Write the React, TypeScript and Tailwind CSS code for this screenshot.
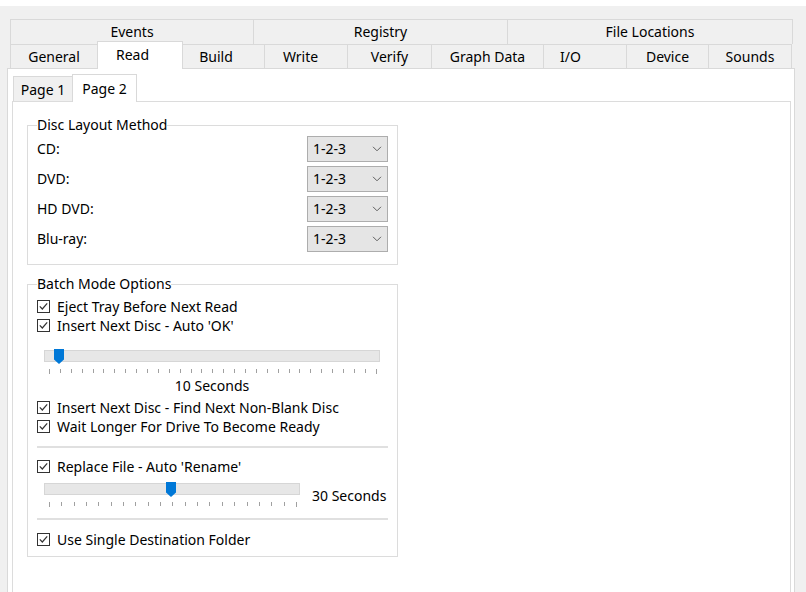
import React from 'react';

type Tab = { label: string; w: string; pad?: string; active?: boolean };

const topTabs: Tab[] = [
  { label: 'Events', w: 'w-[243px]' },
  { label: 'Registry', w: 'w-[254px]' },
  { label: 'File Locations', w: 'w-[286px]' },
];

const mainTabs: Tab[] = [
  { label: 'General', w: 'w-[87px]' },
  { label: 'Read', w: 'w-[86px]', pad: 'pr-[15px]', active: true },
  { label: 'Build', w: 'w-[82px]', pad: 'pr-[15px]' },
  { label: 'Write', w: 'w-[83px]', pad: 'pr-[11px]' },
  { label: 'Verify', w: 'w-[84px]' },
  { label: 'Graph Data', w: 'w-[112px]' },
  { label: 'I/O', w: 'w-[83px]', pad: 'pr-[29px]' },
  { label: 'Device', w: 'w-[82px]' },
  { label: 'Sounds', w: 'w-[84px]' },
];

const discTypes = ['CD:', 'DVD:', 'HD DVD:', 'Blu-ray:'];

const CheckRow = ({ label }: { label: string }) => (
  <div className="flex h-[19px] items-center pl-[9px]">
    <div className="flex h-[13px] w-[13px] items-center justify-center border border-[#333333] bg-white">
      <svg width="11" height="11" viewBox="0 0 11 11">
        <path d="M1.8 5.4 L4.3 8 L9.2 2.4" fill="none" stroke="#333333" strokeWidth="1.2" />
      </svg>
    </div>
    <span className="ml-[7px] whitespace-nowrap">{label}</span>
  </div>
);

const Combo = () => (
  <div className="flex h-[26px] w-[81px] items-center justify-between border border-[#adadad] bg-[#e5e5e5] pl-[5px] pr-[5px]">
    <span>1-2-3</span>
    <svg width="10" height="6" viewBox="0 0 10 6">
      <path d="M1 0.8 L5 4.8 L9 0.8" fill="none" stroke="#606060" strokeWidth="1" />
    </svg>
  </div>
);

// trackbar: track, thumb and tick row
const Slider = ({ width, ticks, thumbLeft }: { width: number; ticks: number; thumbLeft: number }) => (
  <div style={{ width }}>
    <div className="relative h-[12px] border border-[#d6d6d6] bg-[#e7e7e7]">
      <svg
        className="absolute top-[-2px]"
        style={{ left: thumbLeft - 1 }}
        width="10"
        height="15"
        viewBox="0 0 10 15"
      >
        <path d="M0 0 H10 V10.5 L5 15 L0 10.5 Z" fill="#0078d7" />
      </svg>
    </div>
    <div className="mt-[7px] flex h-[6px] items-start justify-between pl-[5px] pr-[3px]">
      {Array.from({ length: ticks }).map((_, i) => (
        <div
          key={i}
          className={
            i === 0 || i === ticks - 1 ? 'h-[5px] w-px bg-[#a0a0a0]' : 'h-[4px] w-px bg-[#a0a0a0]'
          }
        />
      ))}
    </div>
  </div>
);

const App = () => {
  return (
    <div className="h-[592px] w-[806px] overflow-hidden bg-[#f0f0f0] font-['Noto_Sans',sans-serif] text-[14px] leading-[18px] text-black">
      <div className="h-[6px] bg-white" />
      <div className="pl-[7px] pt-[13px]">
        {/* outer tab strip, two rows */}
        <div className="ml-[3px] w-[783px]">
          <div className="flex h-[25px]">
            {topTabs.map((t, i) => (
              <div
                key={t.label}
                className={`${t.w} flex items-center justify-center border-l border-t border-[#d9d9d9] bg-[#f0f0f0] ${
                  i === topTabs.length - 1 ? 'border-r' : ''
                }`}
              >
                {t.label}
              </div>
            ))}
          </div>
          <div className="flex h-[24px] items-end">
            {mainTabs.map((t, i) =>
              t.active ? (
                <div
                  key={t.label}
                  className={`${t.w} ${t.pad} relative z-10 -mb-px -mr-px flex h-[28px] items-center justify-center border-x border-t border-[#d9d9d9] bg-white pb-[2px]`}
                >
                  {t.label}
                </div>
              ) : (
                <div
                  key={t.label}
                  className={`${t.w} ${t.pad ?? ''} flex h-[24px] items-center justify-center border-l border-t border-[#d9d9d9] bg-[#f0f0f0] ${
                    i === mainTabs.length - 1 ? 'border-r' : ''
                  }`}
                >
                  {t.label}
                </div>
              )
            )}
          </div>
        </div>

        {/* outer panel */}
        <div className="h-[540px] w-[788px] border border-[#d9d9d9] bg-white pl-[4px] pr-[3px] pt-[5px]">
          <div className="ml-px flex h-[27px] items-end">
            <div className="flex h-[25px] w-[59px] items-center justify-center border-l border-t border-[#d9d9d9] bg-[#f0f0f0] pt-[2px]">
              Page 1
            </div>
            <div className="relative z-10 -mb-px flex h-[28px] w-[65px] items-center justify-center border-x border-t border-[#d9d9d9] bg-white">
              Page 2
            </div>
          </div>

          {/* inner panel */}
          <div className="h-[520px] border border-[#dcdcdc] bg-white pl-[14px] pt-[14px]">
            <fieldset className="w-[371px] border border-[#dcdcdc] px-[9px] pb-[12px] pt-[2px]">
              <legend className="ml-0 px-0">Disc Layout Method</legend>
              <div className="flex flex-col gap-[4px]">
                {discTypes.map((d) => (
                  <div key={d} className="flex h-[26px] items-center justify-between">
                    <span>{d}</span>
                    <Combo />
                  </div>
                ))}
              </div>
            </fieldset>

            <fieldset className="mt-[10px] w-[371px] border border-[#dcdcdc] pb-[7px] pt-[4px]">
              <legend className="ml-[9px] px-0">Batch Mode Options</legend>
              <CheckRow label="Eject Tray Before Next Read" />
              <CheckRow label="Insert Next Disc - Auto 'OK'" />
              <div className="ml-[16px] mt-[15px] w-[336px]">
                <Slider width={336} ticks={31} thumbLeft={10} />
                <div className="mt-[2px] text-center">10 Seconds</div>
              </div>
              <div className="mt-[3px]">
                <CheckRow label="Insert Next Disc - Find Next Non-Blank Disc" />
                <CheckRow label="Wait Longer For Drive To Become Ready" />
              </div>
              <div className="mx-[9px] mt-[10px] h-[2px] bg-[#e0e0e0]" />
              <div className="mt-[9px]">
                <CheckRow label="Replace File - Auto 'Rename'" />
              </div>
              <div className="ml-[16px] mt-[7px] flex items-center">
                <Slider width={256} ticks={21} thumbLeft={122} />
                <span className="ml-[12px] whitespace-nowrap">30 Seconds</span>
              </div>
              <div className="mx-[9px] mt-[10px] h-[2px] bg-[#e0e0e0]" />
              <div className="mt-[10px]">
                <CheckRow label="Use Single Destination Folder" />
              </div>
            </fieldset>
          </div>
        </div>
      </div>
    </div>
  );
};

export default App;
